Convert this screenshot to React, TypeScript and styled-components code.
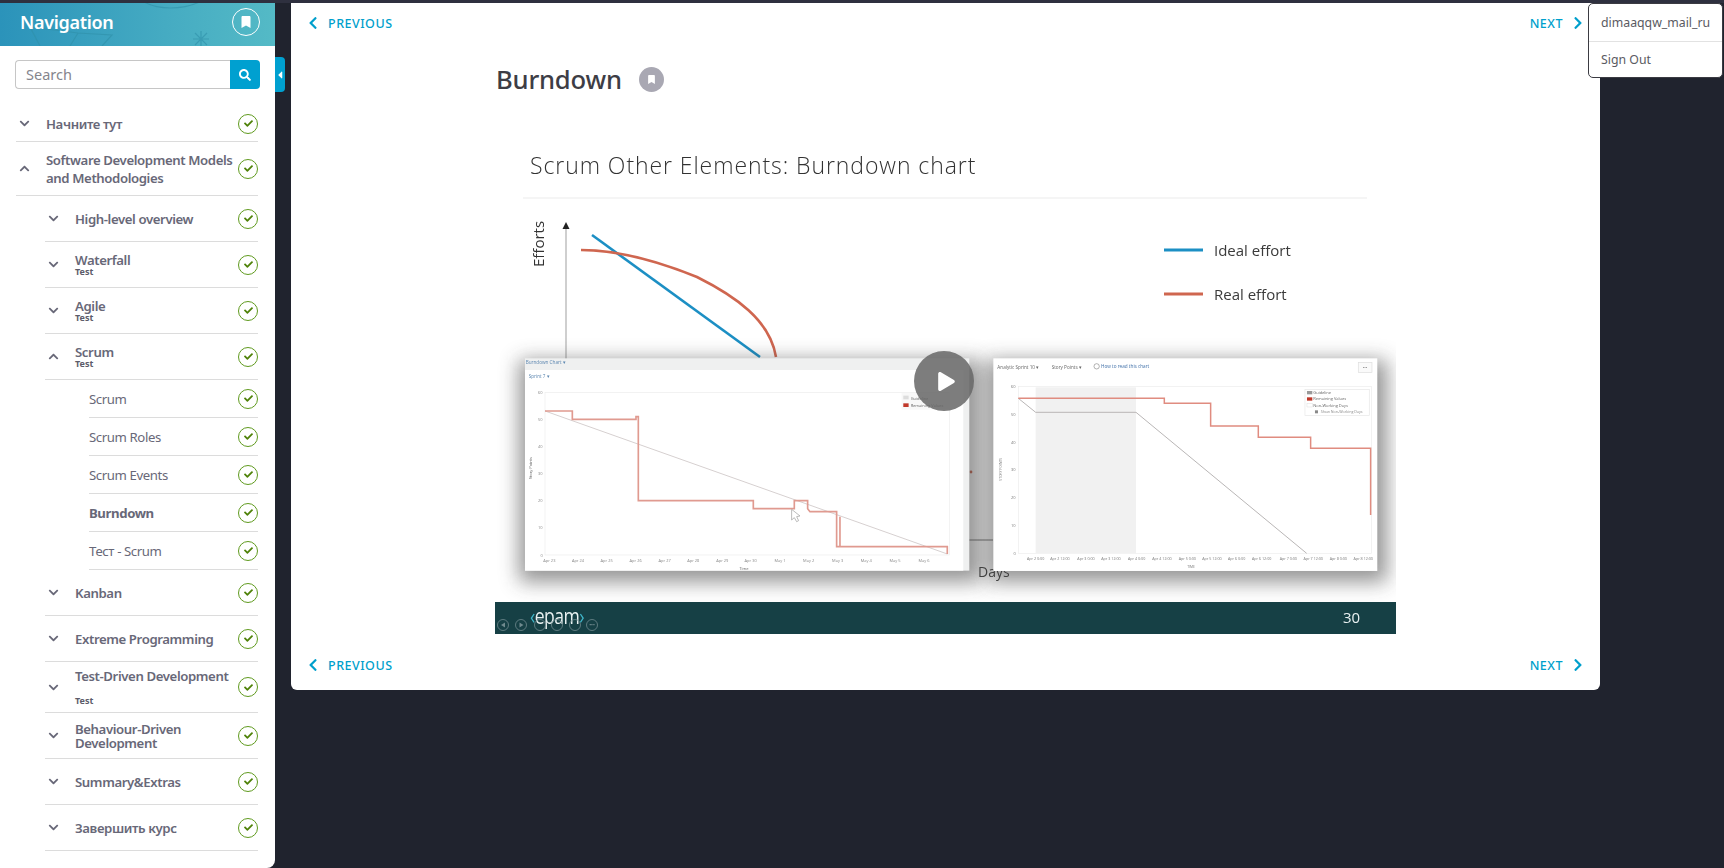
import React from "react";
import styled, { createGlobalStyle } from "styled-components";
import { FaCheck, FaChevronDown, FaChevronLeft, FaChevronRight, FaChevronUp, FaSearch, FaBookmark, FaCaretLeft, FaPlay } from "react-icons/fa";

const GlobalStyle = createGlobalStyle`
  html, body {
    margin: 0;
    padding: 0;
    background: #20232e;
    font-family: "Noto Sans", "Open Sans", sans-serif;
  }
`;

const Page = styled.div`
  display: flex;
  align-items: flex-start;
  height: 868px;
  box-sizing: border-box;
  border-top: 3px solid #2e303f;
  overflow: hidden;
  position: relative;
`;

const Sidebar = styled.aside`
  position: relative;
  flex: 0 0 275px;
  width: 275px;
  min-width: 0;
  height: 865px;
  background: #fff;
  border-bottom-right-radius: 8px;
`;

const SideHeader = styled.header`
  position: relative;
  height: 43px;
  display: flex;
  align-items: center;
  justify-content: space-between;
  padding: 0 15px 6px 20px;
  box-sizing: border-box;
  background: linear-gradient(90deg, #2b93ba 0%, #45abc2 60%, #54bac6 100%);
  overflow: hidden;
`;

const HeaderArt = styled.svg`
  position: absolute;
  left: 0;
  top: 0;
`;

const SideTitle = styled.h2`
  position: relative;
  margin: 0;
  font-size: 18px;
  font-weight: 600;
  letter-spacing: -0.3px;
  color: #fff;
`;

const RoundMark = styled.button`
  position: relative;
  width: 28px;
  height: 28px;
  padding: 0;
  display: flex;
  align-items: center;
  justify-content: center;
  border: 1.5px solid #fff;
  border-radius: 50%;
  background: transparent;
  color: #fff;
  font-size: 12px;
`;

const SearchForm = styled.form`
  display: flex;
  height: 29px;
  margin: 14px 15px 17px;
`;

const SearchInput = styled.input`
  flex: 1;
  min-width: 0;
  box-sizing: border-box;
  padding: 0 10px 2px;
  border: 1px solid #c6c6c6;
  border-right: 0;
  border-radius: 4px 0 0 4px;
  font-family: inherit;
  font-size: 14.5px;
  color: #555;
  &::placeholder {
    color: #85858d;
  }
`;

const SearchButton = styled.button`
  width: 30px;
  padding: 0;
  border: 0;
  border-radius: 0 4px 4px 0;
  background: #00a0d0;
  color: #fff;
  font-size: 12px;
  display: flex;
  align-items: center;
  justify-content: center;
`;

const CollapseTab = styled.div`
  position: absolute;
  left: 275px;
  top: 54px;
  width: 10px;
  height: 35px;
  display: flex;
  align-items: center;
  background: #00a0d0;
  border-radius: 0 4px 4px 0;
  color: #fff;
  font-size: 12px;
`;

const NavList = styled.ul`
  list-style: none;
  margin: 0;
  padding: 0;
`;

const indent = { 0: 16, 1: 45, 2: 89 } as const;

const Row = styled.li<{ $level: 0 | 1 | 2; $height: number }>`
  display: flex;
  align-items: center;
  box-sizing: border-box;
  min-height: ${(p) => p.$height}px;
  margin: 0 17px 0 ${(p) => indent[p.$level]}px;
  border-bottom: 1.5px solid #dcdcdc;
  color: #686878;
`;

const Chevron = styled.span`
  flex: 0 0 30px;
  display: flex;
  align-items: center;
  padding-left: 3px;
  box-sizing: border-box;
  font-size: 11px;
  color: #686878;
`;

const RowText = styled.div`
  flex: 1;
  min-width: 0;
`;

const RowTitle = styled.div<{ $leaf: boolean; $active: boolean; $lh: number }>`
  font-size: 13.2px;
  line-height: ${(p) => p.$lh}px;
  letter-spacing: -0.4px;
  font-weight: ${(p) => (p.$active ? 700 : p.$leaf ? 400 : 600)};
`;

const RowSub = styled.div<{ $gap: number }>`
  margin-top: ${(p) => p.$gap}px;
  font-size: 9px;
  line-height: 10px;
  font-weight: 700;
  color: #5c5c6a;
`;

const Done = styled.span`
  flex: 0 0 20px;
  width: 20px;
  height: 20px;
  box-sizing: border-box;
  margin-left: 2px;
  display: flex;
  align-items: center;
  justify-content: center;
  border: 1.5px solid #5f9a1e;
  border-radius: 50%;
  color: #4f8209;
  font-size: 9px;
`;

const Card = styled.main`
  position: relative;
  flex: 0 0 1309px;
  margin-left: 16px;
  height: 687px;
  background: #fff;
  border-radius: 0 0 6px 6px;
  display: flex;
  flex-direction: column;
`;

const PagerBar = styled.nav<{ $height: number }>`
  display: flex;
  align-items: center;
  justify-content: space-between;
  height: ${(p) => p.$height}px;
  padding: 0 15px;
  color: #009fcc;
`;

const PagerLink = styled.a`
  display: flex;
  align-items: center;
  gap: 8px;
  font-size: 12.5px;
  font-weight: 500;
  letter-spacing: 0.5px;
  text-transform: uppercase;
  svg {
    font-size: 14px;
  }
`;

const TitleRow = styled.div`
  display: flex;
  align-items: center;
  gap: 17px;
  height: 87px;
  padding: 0 0 14px 205px;
  box-sizing: border-box;
`;

const PageTitle = styled.h1`
  margin: 0;
  font-size: 25.6px;
  font-weight: 500;
  letter-spacing: -0.2px;
  color: #3d3d45;
`;

const GreyMark = styled.span`
  width: 25px;
  height: 25px;
  border-radius: 50%;
  background: #a9a8b3;
  color: #fff;
  font-size: 9px;
  display: flex;
  align-items: center;
  justify-content: center;
`;

const Slide = styled.div`
  position: relative;
  width: 901px;
  height: 504px;
  margin: 0 0 6px 204px;
`;

const SlideArt = styled.svg`
  display: block;
`;

const PlayButton = styled.button`
  position: absolute;
  left: 419px;
  top: 221px;
  width: 60px;
  height: 60px;
  padding: 0 0 0 5px;
  border: 0;
  border-radius: 50%;
  background: rgba(104, 104, 104, 0.86);
  color: #fff;
  font-size: 19px;
  display: flex;
  align-items: center;
  justify-content: center;
`;

const UserMenu = styled.div`
  position: absolute;
  left: 1588px;
  top: 0;
  width: 135px;
  height: 75px;
  box-sizing: border-box;
  background: #fff;
  border: 1px solid #3b3b42;
  border-radius: 5px;
  font-size: 12.3px;
  color: #5a5a62;
`;

const MenuItem = styled.div`
  height: 37px;
  display: flex;
  align-items: center;
  padding-left: 12px;
  & + & {
    height: 35px;
    border-top: 1px solid #e2e2e2;
  }
`;

type NavItem = {
  title: React.ReactNode;
  level: 0 | 1 | 2;
  height?: number;
  lh?: number;
  sub?: boolean;
  gap?: number;
  open?: boolean;
  active?: boolean;
};

const items: NavItem[] = [
  { title: "Начните тут", level: 0, height: 36 },
  { title: "Software Development Models and Methodologies", level: 0, height: 54, lh: 18, open: true },
  { title: "High-level overview", level: 1 },
  { title: "Waterfall", level: 1, sub: true },
  { title: "Agile", level: 1, sub: true },
  { title: "Scrum", level: 1, sub: true, open: true },
  { title: "Scrum", level: 2, height: 38 },
  { title: "Scrum Roles", level: 2, height: 38 },
  { title: "Scrum Events", level: 2, height: 38 },
  { title: "Burndown", level: 2, height: 38, active: true },
  { title: "Тест - Scrum", level: 2, height: 38 },
  { title: "Kanban", level: 1 },
  { title: "Extreme Programming", level: 1 },
  { title: "Test-Driven Development", level: 1, height: 51, sub: true, gap: 13 },
  { title: "Behaviour-Driven Development", level: 1, lh: 14 },
  { title: "Summary&Extras", level: 1 },
  { title: "Завершить курс", level: 1 },
];

const slideFont = '"Open Sans", "Liberation Sans", sans-serif';

const ticksA = ["Apr 23", "Apr 24", "Apr 25", "Apr 26", "Apr 27", "Apr 28", "Apr 29", "Apr 30", "May 1", "May 2", "May 3", "May 4", "May 5", "May 6"];
const ticksAx = [118, 204, 290, 377, 464, 550, 637, 722, 810, 896, 983, 1069, 1155, 1242];
const ticksB = ["Apr 2 0:00", "Apr 2 12:00", "Apr 3 0:00", "Apr 3 12:00", "Apr 4 0:00", "Apr 4 12:00", "Apr 5 0:00", "Apr 5 12:00", "Apr 6 0:00", "Apr 6 12:00", "Apr 7 0:00", "Apr 7 12:00", "Apr 8 0:00", "Apr 8 12:00"];
const ticksBx = [167, 240, 318, 393, 470, 546, 622, 696, 770, 845, 925, 1000, 1075, 1150];
const yVals = [60, 50, 40, 30, 20, 10, 0];

function SlideDrawing() {
  return (
    <SlideArt width={901} height={504} viewBox="495 130 901 504" fontFamily={slideFont}>
      <defs>
        <filter id="soft" x="-5%" y="-5%" width="110%" height="110%">
          <feGaussianBlur stdDeviation="0.55" />
        </filter>
        <filter id="panelShadow" x="-10%" y="-15%" width="120%" height="130%">
          <feGaussianBlur stdDeviation="10" />
        </filter>
      </defs>
      <g filter="url(#soft)">
        <rect x="495" y="130" width="901" height="504" fill="#fff" />
        <text x="530" y="174" fontSize="23" fontWeight="300" letterSpacing="0.93" fill="#333">Scrum Other Elements: Burndown chart</text>
        <line x1="523" y1="198" x2="1367" y2="198" stroke="#ececec" strokeWidth="1.2" />
        <text transform="translate(544 267) rotate(-90)" fontSize="15" fill="#333">Efforts</text>
        <line x1="566" y1="228" x2="566" y2="360" stroke="#b5b5b5" strokeWidth="1.3" />
        <polygon points="566,222 562.5,229 569.5,229" fill="#222" />
        <path d="M592 235 L760 357" stroke="#1c8fc4" strokeWidth="2.6" fill="none" />
        <path d="M581 250 C 620 250 660 262 697 277 C 735 296 770 320 776 357" stroke="#cf6650" strokeWidth="2.6" fill="none" />
        <line x1="1164" y1="250" x2="1203" y2="250" stroke="#1c8fc4" strokeWidth="2.8" />
        <text x="1214" y="255.5" fontSize="15" fill="#3a3a3a">Ideal effort</text>
        <line x1="1164" y1="294" x2="1203" y2="294" stroke="#cf6650" strokeWidth="2.8" />
        <text x="1214" y="299.5" fontSize="15" fill="#3a3a3a">Real effort</text>

        <line x1="969" y1="540" x2="993" y2="540" stroke="#777" strokeWidth="1" />
        <circle cx="971" cy="472" r="1.4" fill="#cf6650" />
        <text x="978" y="577" fontSize="14" fill="#444">Days</text>

        <rect x="519" y="360" width="462" height="222" fill="#3c3c3c" opacity="0.55" filter="url(#panelShadow)" />
        <rect x="987" y="360" width="400" height="222" fill="#3c3c3c" opacity="0.55" filter="url(#panelShadow)" />

        <g transform="translate(510 350) scale(0.3333)">
          <rect x="45" y="25" width="1333" height="637" fill="#eff0f0" />
          <rect x="45" y="60" width="1315" height="602" fill="#fff" />
          <text x="47" y="42" fontSize="14" fill="#5b86b0">Burndown Chart ▾</text>
          <text x="56" y="85" fontSize="14" fill="#5b86b0">Sprint 7 ▾</text>
          <rect x="105" y="127" width="1213" height="488" fill="none" stroke="#ececec" strokeWidth="2" />
          {yVals.map((v, i) => (
            <text key={v} x="98" y={132 + i * 81.3} fontSize="12" textAnchor="end" fill="#888">{v}</text>
          ))}
          <text transform="translate(65 388) rotate(-90)" fontSize="12" fill="#666">Story Points</text>
          {ticksA.map((t, i) => (
            <text key={t} x={ticksAx[i]} y="636" fontSize="12" textAnchor="middle" fill="#888">{t}</text>
          ))}
          <text x="702" y="661" fontSize="12" textAnchor="middle" fill="#666">Time</text>
          <line x1="105" y1="183" x2="1312" y2="612" stroke="#d6d0d0" strokeWidth="3" />
          <polyline
            points="105,183 187,183 187,208 378,208 378,200 385,200 385,452 730,452 730,476 853,476 853,452 893,452 893,476 900,485 980,485 980,590 990,590 990,500 990,590 1312,590 1312,612"
            fill="none"
            stroke="#e09a90"
            strokeWidth="5"
          />
          <rect x="1175" y="127" width="143" height="52" fill="#f4f4f4" opacity="0.6" />
          <rect x="1180" y="137" width="16" height="11" fill="#ddd" />
          <rect x="1180" y="160" width="16" height="11" fill="#c0392b" />
          <text x="1202" y="149" fontSize="12" fill="#666">Guideline</text>
          <text x="1202" y="171" fontSize="12" fill="#666">Remaining Values</text>
          <path d="M845 478 L845 510 L853 503 L860 515 L866 512 L860 500 L870 498 Z" fill="#fff" stroke="#999" strokeWidth="2" />
        </g>

        <g transform="translate(980 350) scale(0.3333)">
          <rect x="40" y="25" width="1152" height="638" fill="#fff" />
          <text x="52" y="56" fontSize="14" fill="#666">Analytic Sprint 10 ▾</text>
          <text x="215" y="56" fontSize="14" fill="#666">Story Points ▾</text>
          <circle cx="350" cy="49" r="8" fill="none" stroke="#666" strokeWidth="1.5" />
          <text x="363" y="55" fontSize="14" fill="#3f6fa8">How to read this chart</text>
          <rect x="1135" y="37" width="41" height="30" fill="#fafafa" stroke="#ddd" strokeWidth="2" />
          <text x="1155" y="56" fontSize="12" textAnchor="middle" fill="#777">•••</text>
          <rect x="115" y="110" width="1060" height="500" fill="none" stroke="#ececec" strokeWidth="2" />
          <rect x="167" y="112" width="301" height="498" fill="#f1f1f1" />
          {yVals.map((v, i) => (
            <text key={v} x="107" y={114 + i * 83.3} fontSize="12" textAnchor="end" fill="#777">{v}</text>
          ))}
          <text transform="translate(65 392) rotate(-90)" fontSize="10" fill="#777">STORY POINTS</text>
          {ticksB.map((t, i) => (
            <text key={t} x={ticksBx[i]} y="629" fontSize="11" textAnchor="middle" fill="#777">{t}</text>
          ))}
          <text x="633" y="654" fontSize="10" textAnchor="middle" fill="#777">TIME</text>
          <polyline points="115,145 167,187 468,187 980,610" fill="none" stroke="#b9b6b6" strokeWidth="3" />
          <polyline
            points="115,145 553,145 553,160 692,160 692,228 835,228 835,262 992,262 992,295 1172,295 1172,495"
            fill="none"
            stroke="#e08c80"
            strokeWidth="4.5"
          />
          <rect x="975" y="118" width="193" height="79" fill="#fff" stroke="#e6e6e6" strokeWidth="2" />
          <rect x="981" y="123" width="16" height="10" fill="#999" />
          <rect x="981" y="142" width="16" height="10" fill="#c0392b" />
          <rect x="981" y="161" width="16" height="10" fill="#fff" stroke="#ccc" />
          <rect x="1005" y="181" width="9" height="9" fill="#888" />
          <text x="1000" y="132" fontSize="12" fill="#666">Guideline</text>
          <text x="1000" y="151" fontSize="12" fill="#666">Remaining Values</text>
          <text x="1000" y="170" fontSize="12" fill="#666">Non-Working Days</text>
          <text x="1022" y="190" fontSize="11" fill="#888">Show Non-Working Days</text>
        </g>

        <rect x="495" y="602" width="901" height="32" fill="#173f45" />
        <text transform="translate(530 624) scale(0.98 1.25)" fontSize="18" fontWeight="500" fill="#e8f1f1" letterSpacing="-0.6">
          <tspan fill="#3fb7c9">‹</tspan>epam<tspan fill="#3fb7c9">›</tspan>
        </text>
        <text x="1343" y="623" fontSize="15" fill="#e8f1f1">30</text>
        {[503, 521, 540, 557, 575, 592].map((cx) => (
          <circle key={cx} cx={cx} cy="625" r="5.5" fill="none" stroke="#6f8a8e" strokeWidth="0.8" />
        ))}
        <polygon points="505,622.5 501,625 505,627.5" fill="#6f8a8e" />
        <polygon points="519.5,622.5 523.5,625 519.5,627.5" fill="#6f8a8e" />
        <text x="592" y="627" fontSize="5" textAnchor="middle" fill="#8aa0a3">•••</text>
      </g>
    </SlideArt>
  );
}

function Pager({ height }: { height: number }) {
  return (
    <PagerBar $height={height}>
      <PagerLink>
        <FaChevronLeft />
        Previous
      </PagerLink>
      <PagerLink>
        Next
        <FaChevronRight />
      </PagerLink>
    </PagerBar>
  );
}

export default function App() {
  return (
    <>
      <GlobalStyle />
      <Page>
        <Sidebar>
          <SideHeader>
            <HeaderArt width={275} height={43} viewBox="0 0 275 43" fill="none" stroke="#2f8fa9" strokeOpacity="0.6" strokeWidth="1.2">
              <path d="M140 -4 C 155 8 185 8 205 -4" />
              <path d="M30 24 L78 30 L112 32 L102 43 M30 24 L40 43 M78 30 L70 43" />
              <path d="M201 28 V44 M193 36 H209 M195 30 L207 42 M207 30 L195 42" />
            </HeaderArt>
            <SideTitle>Navigation</SideTitle>
            <RoundMark>
              <FaBookmark />
            </RoundMark>
          </SideHeader>
          <SearchForm>
            <SearchInput placeholder="Search" />
            <SearchButton type="button">
              <FaSearch />
            </SearchButton>
          </SearchForm>
          <CollapseTab>
            <FaCaretLeft />
          </CollapseTab>
          <NavList>
            {items.map((item, i) => (
              <Row key={i} $level={item.level} $height={item.height ?? 46}>
                {item.level < 2 && <Chevron>{item.open ? <FaChevronUp /> : <FaChevronDown />}</Chevron>}
                <RowText>
                  <RowTitle $leaf={item.level === 2} $active={!!item.active} $lh={item.lh ?? 14}>
                    {item.title}
                  </RowTitle>
                  {item.sub && <RowSub $gap={item.gap ?? 0}>Test</RowSub>}
                </RowText>
                <Done>
                  <FaCheck />
                </Done>
              </Row>
            ))}
          </NavList>
        </Sidebar>
        <Card>
          <Pager height={40} />
          <TitleRow>
            <PageTitle>Burndown</PageTitle>
            <GreyMark>
              <FaBookmark />
            </GreyMark>
          </TitleRow>
          <Slide>
            <SlideDrawing />
            <PlayButton>
              <FaPlay />
            </PlayButton>
          </Slide>
          <Pager height={50} />
        </Card>
        <UserMenu>
          <MenuItem>dimaaqqw_mail_ru</MenuItem>
          <MenuItem>Sign Out</MenuItem>
        </UserMenu>
      </Page>
    </>
  );
}
